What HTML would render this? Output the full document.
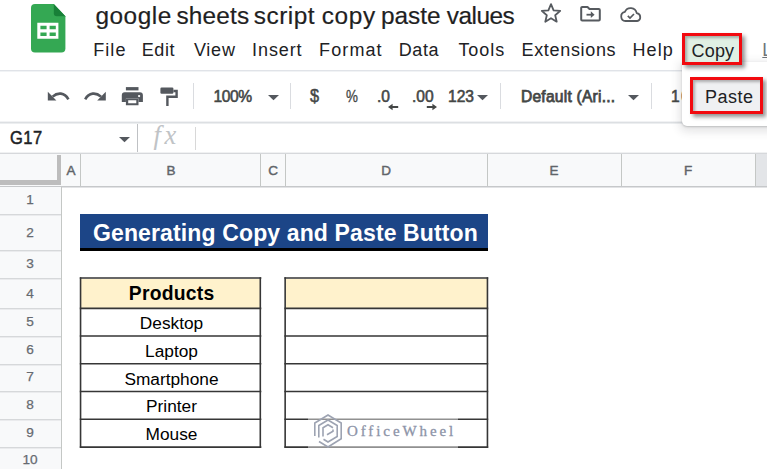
<!DOCTYPE html>
<html lang="en">
<head>
<meta charset="utf-8">
<title>google sheets script copy paste values</title>
<style>
html,body{margin:0;padding:0;}
body{width:767px;height:469px;overflow:hidden;background:#fff;position:relative;font-family:"Liberation Sans",Arial,sans-serif;color:#202124;}
.abs{position:absolute;}
.t{position:absolute;white-space:nowrap;line-height:1;}
/* header */
.tw{top:4px;font-size:24.4px;color:#1f1f1f;-webkit-text-stroke:0.2px #1f1f1f;}
.menu{top:41px;font-size:18px;color:#202124;}
/* toolbar */
#tbtop{left:0;top:70px;width:767px;height:2px;background:linear-gradient(#e0e3e8 0 1px,#f1f3f5 1px 2px);}
#tbbot{left:0;top:121px;width:767px;height:3px;background:linear-gradient(#f1f2f4 0 1px,#dcdfe2 1px 2px,#eceef0 2px 3px);}
.sep{position:absolute;width:1px;background:#dadce0;top:83px;height:26px;}
.tb{top:88.5px;font-size:15.6px;color:#444746;-webkit-text-stroke:0.55px #444746;}
/* formula bar */
#fbbot{left:0;top:152px;width:767px;height:3px;background:linear-gradient(#f0f1f2 0 1px,#d6d8db 1px 2px,#e2e4e6 2px 3px);}
/* grid */
#colhdr{left:0;top:154px;width:767px;height:32px;background:#f8f9fa;border-bottom:1px solid #c6c8ca;box-shadow:0 1px 0 #e2e3e5;}
#rowhdr{left:0;top:187px;width:61px;height:282px;background:#f8f9fa;border-right:1px solid #c4c7c5;}
.cl{position:absolute;top:154px;width:1px;height:32px;background:#c4c7c5;}
.rl{position:absolute;left:0;width:61px;height:2px;background:linear-gradient(#d6d8da 0 1px,#eaebed 1px 2px);}
.ch{top:164px;font-size:13.5px;color:#5f6368;-webkit-text-stroke:0.45px #62666b;width:20px;text-align:center;margin-left:-10px;}
.rh{left:0;width:60px;text-align:center;font-size:13.6px;color:#666a70;-webkit-text-stroke:0.25px #666a70;}
.ct{position:absolute;white-space:nowrap;line-height:1;text-align:center;color:#000;font-size:17.3px;left:82px;width:179px;}
</style>
</head>
<body>

<!-- Sheets logo -->
<svg class="abs" style="left:31px;top:3.6px" width="35" height="49" viewBox="0 0 35 49">
  <path d="M4 0 H22.800 L34.400 12.200 V44.600 a4 4 0 0 1 -4 4 H4 a4 4 0 0 1 -4 -4 V4 a4 4 0 0 1 4 -4 Z" fill="#34a853"/>
  <path d="M22.800 0 L34.400 12.200 H25.800 a3 3 0 0 1 -3 -3 Z" fill="#188038"/>
  <path d="M6.300 18.800 H27.400 V34.800 H6.300 Z M9.400 21.700 V25.200 H15.600 V21.700 Z M18.600 21.700 V25.200 H24.800 V21.700 Z M9.400 28.400 V31.900 H15.600 V28.400 Z M18.600 28.400 V31.900 H24.800 V28.400 Z" fill="#fff" fill-rule="evenodd"/>
</svg>

<div id="title"><span class="t tw" style="left:95.4px;letter-spacing:0.53px">google</span> <span class="t tw" style="left:176.5px;letter-spacing:0.15px">sheets</span> <span class="t tw" style="left:253.7px;letter-spacing:0.53px">script</span> <span class="t tw" style="left:321.7px;letter-spacing:0.68px">copy</span> <span class="t tw" style="left:380.9px;letter-spacing:-0.02px">paste</span> <span class="t tw" style="left:446.8px;letter-spacing:-0.51px">values</span></div>

<!-- title icons -->
<svg class="abs" style="left:539.2px;top:1.3px" width="24" height="24" viewBox="0 0 24 24"><path d="M12 3.200l2.600 6.100 6.600.6-5 4.300 1.500 6.500L12 17.200l-5.700 3.500 1.500-6.500-5-4.300 6.600-.6z" fill="none" stroke="#565a5f" stroke-width="1.800" stroke-linejoin="round"/></svg>
<svg class="abs" style="left:580px;top:3.5px" width="22" height="20" viewBox="0 0 22 20"><path d="M2.200 3 H7.500 L9.500 5 H18.800 a1 1 0 0 1 1 1 V15.500 a1 1 0 0 1 -1 1 H2.200 a1 1 0 0 1 -1 -1 V4 a1 1 0 0 1 1 -1 Z" fill="none" stroke="#565a5f" stroke-width="2" stroke-linejoin="round"/><path d="M6.500 10.700 H11.500" fill="none" stroke="#565a5f" stroke-width="1.800"/><path d="M10.800 7.300 L14.600 10.700 L10.800 14.100 Z" fill="#565a5f"/></svg>
<svg class="abs" style="left:619px;top:4.500px" width="24" height="20" viewBox="0 0 24 20"><path d="M6.500 16 a4.600 4.600 0 0 1 -.6 -9.100 a6.200 6.200 0 0 1 11.800 1.200 a4 4 0 0 1 .3 7.900 Z" fill="none" stroke="#565a5f" stroke-width="1.800" stroke-linejoin="round"/><path d="M8.800 10.900 l2.200 2.200 l4 -4.100" fill="none" stroke="#565a5f" stroke-width="1.700"/></svg>

<!-- menu -->
<div class="t menu" style="left:93.2px;letter-spacing:1.07px">File</div>
<div class="t menu" style="left:141.8px;letter-spacing:0.57px">Edit</div>
<div class="t menu" style="left:193.9px;letter-spacing:0.77px">View</div>
<div class="t menu" style="left:252.1px;letter-spacing:0.89px">Insert</div>
<div class="t menu" style="left:319.1px;letter-spacing:1.10px">Format</div>
<div class="t menu" style="left:398.7px;letter-spacing:0.60px">Data</div>
<div class="t menu" style="left:458.4px;letter-spacing:0.95px">Tools</div>
<div class="t menu" style="left:521.5px;letter-spacing:0.67px">Extensions</div>
<div class="t menu" style="left:632.4px;letter-spacing:1.15px">Help</div>
<div class="t menu" style="left:762.3px;color:#70757a;text-decoration:underline">Last edit was seconds ago</div>

<!-- toolbar -->
<div class="abs" id="tbtop"></div>
<div class="abs" id="tbbot"></div>
<svg class="abs" style="left:0;top:0" width="767" height="469" viewBox="0 0 767 469">
  <g fill="#54585e">
    <!-- undo -->
    <path d="M47.8 91.8 V100.4 H56.4 Z"/>
    <path d="M52.6 96.6 C57.5 92.2 64.6 92.2 68.4 99.4" fill="none" stroke="#54585e" stroke-width="2.6"/>
    <!-- redo -->
    <path d="M105.8 91.8 V100.4 H97.2 Z"/>
    <path d="M101 96.600 C96.100 92.200 89 92.200 85.200 99.400" fill="none" stroke="#54585e" stroke-width="2.6"/>
    <!-- print -->
    <rect x="125.900" y="87.100" width="12.600" height="3.300"/>
    <path d="M121.800 101.900 V95.300 a3 3 0 0 1 3 -3 H139.900 a3 3 0 0 1 3 3 V101.900 H138.500 V98.600 H125.900 V101.900 Z"/>
    <path d="M125.900 98.600 H138.500 V105.300 H125.900 Z M128.200 100.200 V103.200 H136.300 V100.200 Z" fill-rule="evenodd"/>
    <circle cx="139.100" cy="96.100" r="1.150" fill="#fff"/>
    <!-- paint format -->
    <rect x="160.400" y="87.500" width="13" height="6.300" rx="1.200"/>
    <path d="M173.400 91 H176.600 V96.800 H167.400 V105.900" fill="none" stroke="#54585e" stroke-width="2.400"/>
  </g>
</svg>
<div class="sep" style="left:193px"></div>
<div class="t tb" style="left:213.5px;letter-spacing:-0.45px">100%</div>
<svg class="abs" style="left:268px;top:95px" width="11" height="6" viewBox="0 0 11 6"><path d="M0 0 H11 L5.500 5.300 Z" fill="#54585e"/></svg>
<div class="sep" style="left:290px"></div>
<div class="t tb" style="left:310px;font-size:18.5px;top:86.5px;transform:scaleX(0.88);transform-origin:0 0">$</div>
<div class="t tb" style="left:345.5px;font-size:15.6px;top:88.5px;-webkit-text-stroke-width:0.3px;transform:scaleX(0.86);transform-origin:0 0">%</div>
<div class="t tb" style="left:377px">.0</div>
<svg class="abs" style="left:387.5px;top:103px" width="11" height="8" viewBox="0 0 11 8"><path d="M10.200 3 H4.600 V0.800 L0 4 L4.600 7.200 V5 H10.200 Z" fill="#444746"/></svg>
<div class="t tb" style="left:412px">.00</div>
<svg class="abs" style="left:426px;top:103px" width="11" height="8" viewBox="0 0 11 8"><path d="M0.800 3 H6.400 V0.800 L11 4 L6.400 7.200 V5 H0.800 Z" fill="#444746"/></svg>
<div class="t tb" style="left:448px">123</div>
<svg class="abs" style="left:477px;top:95px" width="11" height="6" viewBox="0 0 11 6"><path d="M0 0 H11 L5.500 5.300 Z" fill="#54585e"/></svg>
<div class="sep" style="left:500px"></div>
<div class="t tb" style="left:521px;letter-spacing:0.22px;-webkit-text-stroke-width:0.75px">Default (Ari...</div>
<svg class="abs" style="left:628px;top:95px" width="11" height="6" viewBox="0 0 11 6"><path d="M0 0 H11 L5.500 5.300 Z" fill="#54585e"/></svg>
<div class="sep" style="left:651px"></div>
<div class="t tb" style="left:671px;letter-spacing:1.5px">10</div>

<!-- formula bar -->
<div class="t" style="left:9.8px;top:129px;font-size:18.8px;letter-spacing:0.5px;transform:scaleX(0.88);transform-origin:0 0;color:#202124;-webkit-text-stroke:0.5px #202124">G17</div>
<svg class="abs" style="left:119px;top:137px" width="11" height="6" viewBox="0 0 11 6"><path d="M0 0 H11 L5.500 5.300 Z" fill="#54585e"/></svg>
<div class="abs" style="left:137px;top:124px;width:1px;height:28px;background:#bfc1c4"></div>
<div class="t" style="left:153.5px;top:122px;font-family:'Liberation Serif',serif;font-style:italic;font-size:26.5px;letter-spacing:3.6px;color:#c0c3c6">fx</div>
<div class="abs" style="left:195px;top:127px;width:1px;height:23px;background:#d8d8d8"></div>
<div class="abs" id="fbbot"></div>

<!-- column headers -->
<div class="abs" id="colhdr"></div>
<div class="abs" style="left:756px;top:154px;width:11px;height:32px;background:#e3e5e8"></div>
<div class="cl" style="left:80px"></div>
<div class="cl" style="left:260px"></div>
<div class="cl" style="left:285px"></div>
<div class="cl" style="left:487px"></div>
<div class="cl" style="left:621px"></div>
<div class="cl" style="left:755px"></div>
<div class="t ch" style="left:71px">A</div>
<div class="t ch" style="left:171px">B</div>
<div class="t ch" style="left:273px">C</div>
<div class="t ch" style="left:386px">D</div>
<div class="t ch" style="left:554px">E</div>
<div class="t ch" style="left:688px">F</div>

<!-- row headers -->
<div class="abs" id="rowhdr"></div>
<div class="rl" style="top:214px"></div>
<div class="rl" style="top:250px"></div>
<div class="rl" style="top:278px"></div>
<div class="rl" style="top:308px"></div>
<div class="rl" style="top:336px"></div>
<div class="rl" style="top:364px"></div>
<div class="rl" style="top:391px"></div>
<div class="rl" style="top:419px"></div>
<div class="rl" style="top:447px"></div>
<div class="t rh" style="top:192.5px">1</div>
<div class="t rh" style="top:226px">2</div>
<div class="t rh" style="top:257px">3</div>
<div class="t rh" style="top:287px">4</div>
<div class="t rh" style="top:315px">5</div>
<div class="t rh" style="top:343px">6</div>
<div class="t rh" style="top:370px">7</div>
<div class="t rh" style="top:398px">8</div>
<div class="t rh" style="top:426px">9</div>
<div class="t rh" style="top:453px">10</div>
<!-- corner -->
<div class="abs" style="left:0;top:155px;width:57px;height:25px;background:#f8f9fa;border-right:4px solid #bdbdbd;border-bottom:5px solid #bdbdbd"></div>

<!-- banner -->
<div class="abs" style="left:80px;top:214px;width:408px;height:34px;background:#1c4587;border-bottom:3px solid #000"></div>
<div class="t" style="left:93px;top:222px;font-size:23px;font-weight:bold;letter-spacing:0.13px;color:#fff">Generating Copy and Paste Button</div>

<!-- table 1 -->
<div class="abs" style="left:81px;top:279px;width:179px;height:29px;background:#fff2cc"></div>
<div class="abs" style="left:286px;top:279px;width:201px;height:29px;background:#fff2cc"></div>
<div class="ct" style="top:284px;font-size:19.3px;font-weight:bold;letter-spacing:0.25px;text-indent:0.25px">Products</div>
<div class="ct" style="top:315px">Desktop</div>
<div class="ct" style="top:343px">Laptop</div>
<div class="ct" style="top:371px">Smartphone</div>
<div class="ct" style="top:398px">Printer</div>
<div class="ct" style="top:426px">Mouse</div>

<!-- table borders -->
<svg class="abs" style="left:0;top:0" width="767" height="469" viewBox="0 0 767 469"><g stroke="#363636" stroke-width="1.6" fill="none">
<path d="M79.8 278 H261.3 M284.4 278 H488.2"/>
<path d="M79.8 308.4 H261.3 M284.4 308.4 H488.2"/>
<path d="M79.8 336 H261.3 M284.4 336 H488.2"/>
<path d="M79.8 363.8 H261.3 M284.4 363.8 H488.2"/>
<path d="M79.8 391.5 H261.3 M284.4 391.5 H488.2"/>
<path d="M79.8 419.3 H261.3 M284.4 419.3 H488.2"/>
<path d="M79.8 447.1 H261.3 M284.4 447.1 H488.2"/>
<path d="M80.55 277.3 V447.8"/>
<path d="M260.3 277.3 V447.8"/>
<path d="M285.15 277.3 V447.8"/>
<path d="M487.45 277.3 V447.8"/>
</g></svg>

<!-- watermark -->
<div class="abs" style="left:308px;top:412px;width:150px;height:40px;background:rgba(255,255,255,0.45)"></div>
<svg class="abs" style="left:311px;top:412px" width="34" height="38" viewBox="-17 -19 34 38"><g fill="none" stroke="#9da3b2" stroke-width="1.6" stroke-linejoin="miter">
<path d="M-13.2 5 V-8 L0 -16 L13.200 -8 V7.800 L0 16 L-9 10.500"/>
<path d="M-9.200 6.500 V-5.500 L0 -11 L9.200 -5.500 V5.500 L0 11 L-4.500 8.200"/>
<path d="M5 -3.200 L0 -6.200 L-5 -3.200 V5.500 M-1 3.800 L5 0.300 V-1.500"/>
</g></svg>
<div class="t" style="left:347px;top:423.5px;font-family:'Liberation Serif',serif;font-size:15px;letter-spacing:2.9px;color:#8d94a8;-webkit-text-stroke:0.3px #8d94a8">OfficeWheel</div>

<!-- Copy / Paste popup -->
<div class="abs" style="left:682px;top:62px;width:100px;height:64px;background:#fff;border-radius:0 0 0 5px;box-shadow:0 1px 2px rgba(60,64,67,.26),0 3px 8px 3px rgba(60,64,67,.13)"></div>
<div class="abs" style="left:682px;top:33px;width:54px;height:25.5px;background:#e0f0e4;border:3px solid #f20a0f;box-shadow:2.5px 2.5px 4px rgba(0,0,0,.42),inset 2px 2px 3px rgba(0,0,0,.28)"></div>
<div class="t menu" style="left:691.5px;top:42px;letter-spacing:0.2px">Copy</div>
<div class="abs" style="left:690px;top:77px;width:67px;height:31px;background:#eff0f2;border:3px solid #f20a0f;box-shadow:2.5px 2.5px 4px rgba(0,0,0,.42),inset 2px 2px 3px rgba(0,0,0,.28)"></div>
<div class="t" style="left:705px;top:87.5px;font-size:18px;letter-spacing:0.5px;color:#202124">Paste</div>

</body>
</html>
